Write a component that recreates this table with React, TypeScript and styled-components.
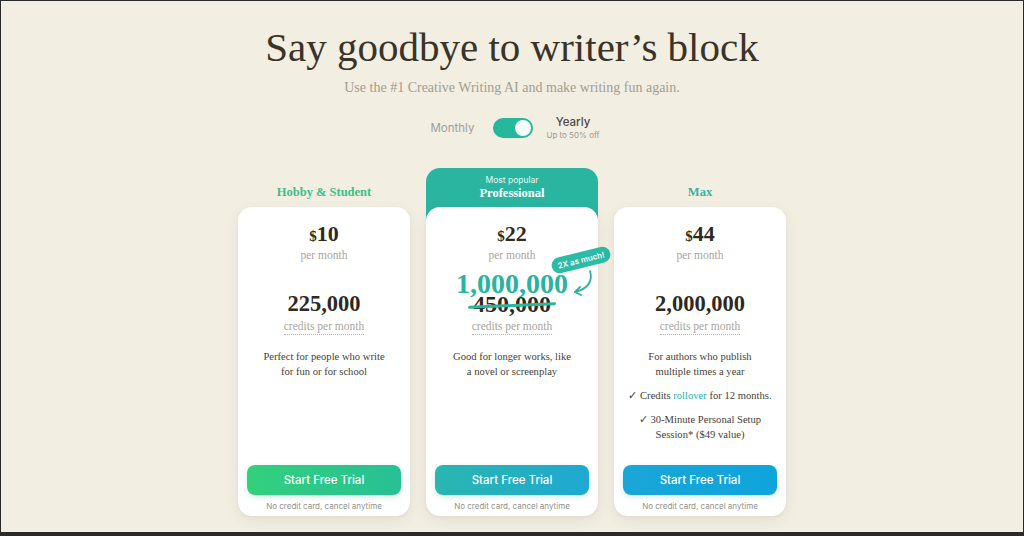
import React from "react";
import styled, { createGlobalStyle } from "styled-components";

const Global = createGlobalStyle`
  html, body { margin: 0; padding: 0; background: #f2eee2; }
  #root { width: 1024px; height: 536px; }
  * { box-sizing: border-box; }
`;

const SERIF = `"Liberation Serif", "Times New Roman", serif`;
const SANS = `Inter, "Liberation Sans", Arial, sans-serif`;

const Page = styled.div`
  width: 1024px;
  height: 536px;
  border-top: 1px solid #2a2a2a;
  border-left: 1px solid #2a2a2a;
  border-right: 1px solid #2a2a2a;
  border-bottom: 4px solid #2a2a2a;
  background: #f2eee2;
  display: flex;
  flex-direction: column;
  align-items: center;
  font-family: ${SERIF};
  overflow: hidden;
`;

const Title = styled.h1`
  margin: 0;
  padding-top: 24px;
  font-family: ${SERIF};
  font-weight: 400;
  font-size: 41px;
  line-height: 44px;
  color: #3a3327;
`;

const Subtitle = styled.p`
  margin: 10px 0 0;
  font-size: 14px;
  line-height: 18px;
  color: #a29d90;
`;

const ToggleRow = styled.div`
  margin-top: 17px;
  height: 28px;
  display: flex;
  align-items: center;
  gap: 19px;
  font-family: ${SANS};
  padding-left: 6px;
`;

const ToggleLabel = styled.span`
  font-size: 11.5px;
  color: #a19e97;
`;

const Switch = styled.div`
  width: 40px;
  height: 20px;
  border-radius: 10px;
  background: #27b89c;
  display: flex;
  align-items: center;
  justify-content: flex-end;
  padding: 0 2px;
`;

const Knob = styled.div`
  width: 16px;
  height: 16px;
  border-radius: 50%;
  background: #f4fbfb;
`;

const YearlyBox = styled.div`
  display: flex;
  flex-direction: column;
  align-items: center;
  margin-left: -6px;
`;

const Yearly = styled.span`
  font-size: 11.5px;
  font-weight: 500;
  color: #4a4a47;
  line-height: 14px;
`;

const YearlySub = styled.span`
  font-size: 8px;
  color: #9d9a93;
  line-height: 13px;
`;

const Cards = styled.div`
  margin-top: 26px;
  display: grid;
  grid-template-columns: repeat(3, 172px);
  gap: 16px;
`;

const Column = styled.div<{ $featured?: boolean }>`
  display: flex;
  flex-direction: column;
  border-radius: 14px;
  background: ${(p) =>
    p.$featured
      ? "linear-gradient(#2ab5a0, #2ab5a0) top / 100% 60px no-repeat"
      : "transparent"};
`;

const LabelArea = styled.div`
  height: 39px;
  display: flex;
  flex-direction: column;
  align-items: center;
  justify-content: flex-end;
  padding-bottom: 8px;
`;

const FeaturedHead = styled.div`
  height: 39px;
  display: flex;
  flex-direction: column;
  align-items: center;
  padding-top: 6px;
  color: #fff;
`;

const MostPopular = styled.span`
  font-family: ${SANS};
  font-size: 8.5px;
  line-height: 12px;
  color: #e6f7f3;
`;

const PlanName = styled.span<{ $color: string }>`
  font-weight: 700;
  font-size: 12.5px;
  line-height: 14px;
  color: ${(p) => p.$color};
`;

const Card = styled.div`
  position: relative;
  height: 309px;
  border-radius: 14px;
  background: #fff;
  box-shadow: 0 4px 14px rgba(60, 50, 20, 0.08), 0 1px 3px rgba(60, 50, 20, 0.05);
  display: flex;
  flex-direction: column;
  align-items: center;
  padding: 15px 9px 4px;
  text-align: center;
`;

const Price = styled.div`
  font-weight: 700;
  font-size: 22px;
  line-height: 24px;
  color: #2f2a21;
`;

const Dollar = styled.span`
  font-size: 15px;
`;

const Muted = styled.div`
  font-size: 11.5px;
  line-height: 14px;
  color: #a9a59c;
`;

const CreditsArea = styled.div`
  height: 57px;
  display: flex;
  flex-direction: column;
  align-items: center;
  justify-content: flex-end;
  padding-bottom: 3px;
`;

const Credits = styled.div<{ $size?: number; $lh?: number; $color?: string }>`
  position: relative;
  font-weight: 700;
  font-size: ${(p) => p.$size ?? 22.5}px;
  line-height: ${(p) => p.$lh ?? 24}px;
  color: ${(p) => p.$color ?? "#2f2a21"};
`;

const Struck = styled(Credits)`
  margin-bottom: 2px;
  &::after {
    content: "";
    position: absolute;
    left: -5px;
    right: -5px;
    top: 46%;
    height: 2.5px;
    border-radius: 2px;
    background: #2ab5a0;
    transform: rotate(-2.5deg);
  }
`;

const CreditsNote = styled.div`
  font-size: 11.5px;
  line-height: 14px;
  color: #a9a59c;
  border-bottom: 1px dotted #b5b1a8;
  padding-bottom: 1px;
`;

const Desc = styled.p<{ $gap?: number }>`
  margin: ${(p) => p.$gap ?? 14}px 0 0;
  font-size: 10.6px;
  line-height: 15px;
  color: #474136;
`;

const Teal = styled.span`
  color: #22aeb0;
`;

const Button = styled.button<{ $from: string; $to: string }>`
  margin-top: auto;
  width: 154px;
  height: 30px;
  border: none;
  border-radius: 8px;
  background: linear-gradient(90deg, ${(p) => p.$from}, ${(p) => p.$to});
  color: #fff;
  font-family: ${SANS};
  font-size: 11.5px;
  font-weight: 500;
  box-shadow: 0 2px 6px rgba(30, 150, 130, 0.18);
`;

const Note = styled.div`
  margin-top: 5px;
  font-family: ${SANS};
  font-size: 8px;
  line-height: 12px;
  color: #8f8f8c;
`;

const Badge = styled.div`
  position: absolute;
  left: 125px;
  top: 45px;
  padding: 3px 6px;
  border-radius: 9px;
  background: #2bbba6;
  color: #fff;
  font-family: ${SANS};
  font-weight: 600;
  font-size: 8px;
  line-height: 10px;
  white-space: nowrap;
  transform: rotate(-14deg);
`;

const Arrow = styled.svg`
  position: absolute;
  left: 142px;
  top: 62px;
`;

const PriceBlock: React.FC<{ price: string }> = ({ price }) => (
  <>
    <Price>
      <Dollar>$</Dollar>
      {price}
    </Price>
    <Muted>per month</Muted>
  </>
);

const Footer: React.FC<{ from: string; to: string }> = ({ from, to }) => (
  <>
    <Button $from={from} $to={to}>Start Free Trial</Button>
    <Note>No credit card, cancel anytime</Note>
  </>
);

export default function App() {
  return (
    <>
      <Global />
      <Page>
        <Title>Say goodbye to writer’s block</Title>
        <Subtitle>Use the #1 Creative Writing AI and make writing fun again.</Subtitle>
        <ToggleRow>
          <ToggleLabel>Monthly</ToggleLabel>
          <Switch>
            <Knob />
          </Switch>
          <YearlyBox>
            <Yearly>Yearly</Yearly>
            <YearlySub>Up to 50% off</YearlySub>
          </YearlyBox>
        </ToggleRow>
        <Cards>
          <Column>
            <LabelArea>
              <PlanName $color="#3dbf88">Hobby &amp; Student</PlanName>
            </LabelArea>
            <Card>
              <PriceBlock price="10" />
              <CreditsArea>
                <Credits>225,000</Credits>
              </CreditsArea>
              <CreditsNote>credits per month</CreditsNote>
              <Desc>
                Perfect for people who write
                <br />
                for fun or for school
              </Desc>
              <Footer from="#33d07c" to="#27c095" />
            </Card>
          </Column>

          <Column $featured>
            <FeaturedHead>
              <MostPopular>Most popular</MostPopular>
              <PlanName $color="#ffffff">Professional</PlanName>
            </FeaturedHead>
            <Card>
              <PriceBlock price="22" />
              <CreditsArea>
                <Credits $size={28} $lh={22} $color="#2ab3a0">1,000,000</Credits>
                <Struck $size={24} $lh={19}>450,000</Struck>
              </CreditsArea>
              <CreditsNote>credits per month</CreditsNote>
              <Desc>
                Good for longer works, like
                <br />
                a novel or screenplay
              </Desc>
              <Footer from="#2ab6b0" to="#1fa8d2" />
              <Badge>2X as much!</Badge>
              <Arrow width="30" height="30" viewBox="0 0 30 30" fill="none">
                <path
                  d="M22 2 C 25 12, 20 20, 7 23"
                  stroke="#2ab3a0"
                  strokeWidth="1.8"
                  strokeLinecap="round"
                />
                <path
                  d="M12 18 L7 23 L13 26"
                  stroke="#2ab3a0"
                  strokeWidth="1.8"
                  strokeLinecap="round"
                  strokeLinejoin="round"
                />
              </Arrow>
            </Card>
          </Column>

          <Column>
            <LabelArea>
              <PlanName $color="#35b3a3">Max</PlanName>
            </LabelArea>
            <Card>
              <PriceBlock price="44" />
              <CreditsArea>
                <Credits>2,000,000</Credits>
              </CreditsArea>
              <CreditsNote>credits per month</CreditsNote>
              <Desc>
                For authors who publish
                <br />
                multiple times a year
              </Desc>
              <Desc $gap={9}>
                ✓ Credits <Teal>rollover</Teal> for 12 months.
              </Desc>
              <Desc $gap={9}>
                ✓ 30-Minute Personal Setup
                <br />
                Session* ($49 value)
              </Desc>
              <Footer from="#1aa6d8" to="#0ea4dc" />
            </Card>
          </Column>
        </Cards>
      </Page>
    </>
  );
}
